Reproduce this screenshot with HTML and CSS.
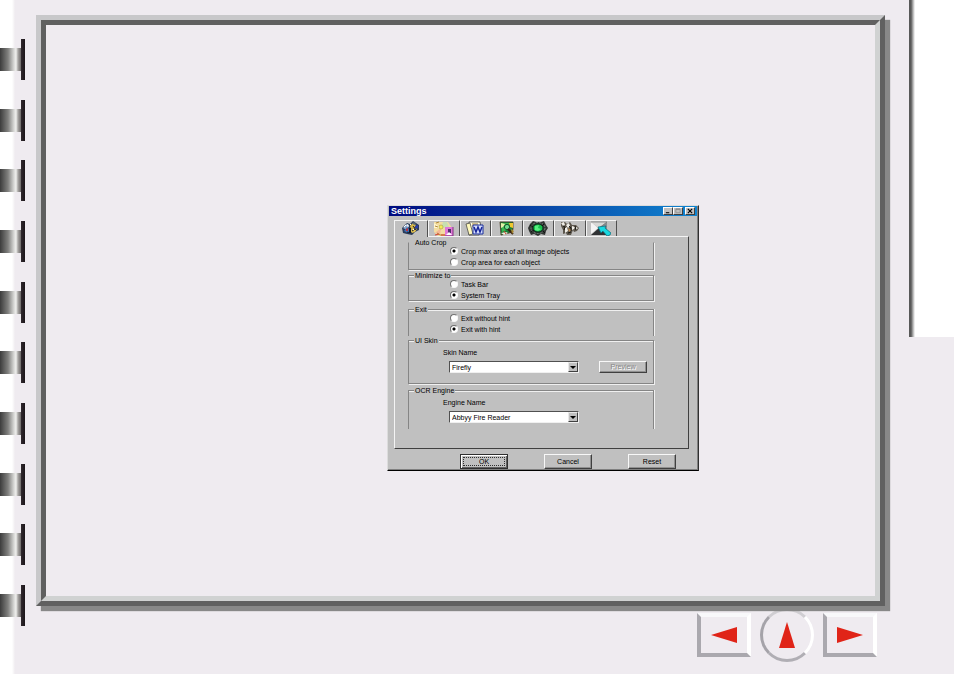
FILE: index.html
```html
<!DOCTYPE html>
<html lang="en">
<head>
<meta charset="utf-8">
<title>Settings</title>
<link rel="stylesheet" href="styles.css">
</head>
<body>
<div class="book">
  <div class="binding">
    <span class="ring"></span><span class="ring"></span><span class="ring"></span><span class="ring"></span><span class="ring"></span>
    <span class="ring"></span><span class="ring"></span><span class="ring"></span><span class="ring"></span><span class="ring"></span>
  </div>
  <main class="main">
    <div class="frame"><div class="sheet">
      <section class="dialog">
        <header class="titlebar">
          <h1>Settings</h1>
          <div class="winbtns">
            <button type="button" aria-label="Minimize"><svg viewBox="0 0 9 7"><path d="M2 5.5h4" stroke="#000" stroke-width="1.2"/></svg></button>
            <button type="button" aria-label="Maximize" disabled><svg viewBox="0 0 9 7"><path d="M2 1.5h5v4H2z" fill="none" stroke="#909090"/><path d="M2 1.2h5" stroke="#808080"/></svg></button>
            <button type="button" aria-label="Close"><svg viewBox="0 0 9 7"><path d="M2 1l5 5M7 1L2 6" stroke="#000" stroke-width="1.3"/></svg></button>
          </div>
        </header>
        <nav class="tabs">
          <button type="button" class="tab active" aria-label="General"><svg viewBox="0 0 20 15">
            <path d="M1 7l5-5 3 1 3-3 3 2 3 2v5l-4 2-3 3-5-1-4-1z" fill="#2b3b58"/>
            <path d="M2 7l4-4 2 2-2 4z" fill="#8fa9cc"/><path d="M3 10l3-4 3 3-2 3z" fill="#3c72b8"/><path d="M5 4l2-1 1 2-1 1z" fill="#e8f0f8"/>
            <path d="M5 8l2-1v3H5z" fill="#c03038"/><path d="M9 5l3-3 3 2-2 3-3 1z" fill="#d8b848"/><path d="M11 2l2-1 2 2-2 1z" fill="#586878"/>
            <path d="M14 5l3-1v3l-3 1z" fill="#283ca8"/><path d="M9 9l3-2 4 1-2 3-3 1z" fill="#e0c050"/><path d="M8 7h2v5H8z" fill="#101828"/><path d="M12 5l3 4M6 11l2 1M11 10l3-2" stroke="#182030"/><path d="M3 6l2-2M9 4l1-1M12 8l1 1" stroke="#fff"/>
          </svg></button>
          <button type="button" class="tab" aria-label="Photo CD"><svg viewBox="0 0 20 15">
            <path d="M0 1h14l4 6v6l-5 2H4l-4-4z" fill="#f3dda0"/><path d="M7 7L0 2v5z" fill="#fff6d0"/><path d="M7 7l2-6h4l2 5z" fill="#c8e0b0"/><path d="M7 7L1 12l5 2z" fill="#f4b898"/>
            <path d="M2 2l3-1M1 5l3 1M3 12l3 2h5" fill="none" stroke="#b08838"/><circle cx="7" cy="6" r="2" fill="#f4ec58" stroke="#a89848" stroke-width=".6"/>
            <path d="M11 6h8v9h-8z" fill="#e078d8"/><path d="M19 6v9h-8" fill="none" stroke="#803080"/><path d="M14 8h3v4h-3z" fill="#503068"/><path d="M12 14l3-3 3 3z" fill="#fff"/><path d="M1 14l4-1M7 14h4" stroke="#d84030"/>
          </svg></button>
          <button type="button" class="tab" aria-label="Document"><svg viewBox="0 0 20 15">
            <path d="M4 1h11l1 5-2 8H4z" fill="#fffde6" stroke="#444" stroke-width=".8"/><path d="M1 3l4-1 3 11-4 1z" fill="#fff9bb" stroke="#4b4b46" stroke-width=".8"/><path d="M7 3h6M7 5h3" stroke="#9c7a2e"/><path d="M8 4h10v9H8z" fill="#d4dcfc" stroke="#1b2f9a"/><path d="M9 6l2 5 2-5 2 5 2-5" fill="none" stroke="#16259a" stroke-width="1.5"/>
          </svg></button>
          <button type="button" class="tab" aria-label="Image"><svg viewBox="0 0 20 15">
            <path d="M3 1h13v7l-1 3-3 1-8 2z" fill="#188038" stroke="#4a3820" stroke-width=".8"/><path d="M4 2h8v6l-7 3z" fill="#38b850"/><path d="M4 2l4 1-2 3-2 1z" fill="#e4f0a8"/><path d="M12 2h4v5l-3-1z" fill="#f0c830"/><circle cx="10" cy="6" r="2.6" fill="#70e090" stroke="#185028"/><path d="M11 8l5 5" stroke="#382010" stroke-width="2"/><path d="M14 8l3 2-2 3z" fill="#a88830"/><path d="M4 12l5-1 2 1-4 2z" fill="#f0f0e0"/><path d="M7 10l2 3" stroke="#c84028"/>
          </svg></button>
          <button type="button" class="tab" aria-label="Processing"><svg viewBox="0 0 20 15">
            <path d="M2 3l3-3 3 1h5l3-1 2 4 2 3-2 3-1 4-4-1-3 2-4-2-3 1-2-4-1-3z" fill="#303432"/><ellipse cx="10" cy="7" rx="7" ry="5.5" fill="none" stroke="#7c8680" stroke-dasharray="2 1"/><ellipse cx="10" cy="7" rx="5" ry="4" fill="#18c04c" stroke="#08301c"/><path d="M7 5l4-1-1 3 3 1-3 2-3-1z" fill="#58f080"/><path d="M2 4l3 2M16 3l-2 2M3 11l3-2M15 10l2 2" stroke="#101210"/>
          </svg></button>
          <button type="button" class="tab" aria-label="Devices"><svg viewBox="0 0 20 15">
            <path d="M1 1h4l2 2 3-2 2 3h4l3 3-2 3-3 1-1-2-2 5H7l-1-2-3 1V9L1 5z" fill="#5c564c"/><path d="M1 2l3-1 1 3-2 1zM6 4l3-2 1 3-2 2zM5 7l2-1 1 4-3 2zM12 5l3 1-1 2-2 1zM16 6l2 1-2 2z" fill="#f0eee8"/><path d="M3 5l2 1-1 3M9 5l2 2v3M15 5l1 4M8 12l3-1" fill="none" stroke="#181610"/><path d="M8 7l3 2-2 2z" fill="#c09058"/>
          </svg></button>
          <button type="button" class="tab" aria-label="Mail"><svg viewBox="0 0 20 15">
            <path d="M0 1h16v13H0z" fill="#c4c4c4"/><path d="M0 1v12l7-6z" fill="#f4f4f4"/><path d="M0 1h16L8 7z" fill="#d8d8d6"/><path d="M16 1v10L8 7z" fill="#888c90"/><path d="M0 14l8-7 8 7z" fill="#303234"/><path d="M0 1h16M16 1L8 7" stroke="#707274" stroke-width=".7"/>
            <path d="M7 6l8-1-1 2 6 5-1 2-3 1-4-5-2 2z" fill="#18d8e0" stroke="#086878" stroke-width=".7"/>
          </svg></button>
        </nav>
        <form class="panel">
          <fieldset class="group crop"><legend>Auto Crop</legend>
            <label class="radio"><input type="radio" name="crop" checked>Crop max area of all image objects</label>
            <label class="radio"><input type="radio" name="crop">Crop area for each object</label>
          </fieldset>
          <fieldset class="group minimize"><legend>Minimize to</legend>
            <label class="radio"><input type="radio" name="minimize">Task Bar</label>
            <label class="radio"><input type="radio" name="minimize" checked>System Tray</label>
          </fieldset>
          <fieldset class="group exit"><legend>Exit</legend>
            <label class="radio"><input type="radio" name="exit">Exit without hint</label>
            <label class="radio"><input type="radio" name="exit" checked>Exit with hint</label>
          </fieldset>
          <fieldset class="group skin"><legend>UI Skin</legend>
            <label class="caption" for="skin">Skin Name</label>
            <div class="row">
              <span class="combo"><select id="skin"><option>Firefly</option></select><svg class="arrow" viewBox="0 0 8 8"><path d="M1 3h6L4 6z"/></svg></span>
              <button type="button" class="btn preview" disabled>Preview</button>
            </div>
          </fieldset>
          <fieldset class="group ocr"><legend>OCR Engine</legend>
            <label class="caption" for="engine">Engine Name</label>
            <div class="row">
              <span class="combo"><select id="engine"><option>Abbyy Fire Reader</option></select><svg class="arrow" viewBox="0 0 8 8"><path d="M1 3h6L4 6z"/></svg></span>
            </div>
          </fieldset>
        </form>
        <footer class="actions">
          <button type="button" class="btn default">OK</button>
          <button type="button" class="btn">Cancel</button>
          <button type="button" class="btn">Reset</button>
        </footer>
      </section>
    </div></div>
    <nav class="pager">
      <a class="page-link" href="#previous" aria-label="Previous page"><svg viewBox="0 0 26 18"><path d="M0 9L26 1v16z"/></svg></a>
      <a class="page-link round" href="#top" aria-label="Contents"><svg viewBox="0 0 18 26"><path d="M9 0l8 26H1z"/></svg></a>
      <a class="page-link" href="#next" aria-label="Next page"><svg viewBox="0 0 26 18"><path d="M26 9L0 1v16z"/></svg></a>
    </nav>
  </main>
  <aside class="edge"></aside>
</div>
</body>
</html>
```
FILE: styles.css
```css
* { box-sizing: border-box; }

body {
  margin: 0;
  background: #efebf0;
  font: 7px/11px "Liberation Sans", Arial, sans-serif;
  color: #000;
}

button, select, input { font: inherit; color: inherit; margin: 0; }
svg { display: block; }

.book {
  display: grid;
  grid-template-columns: 36px minmax(0, 1fr) 69px;
  min-height: 100vh;
  background: linear-gradient(90deg, #fff 12px, #f4f2f4 14px, #efebf0 15px);
}

.binding {
  display: flex;
  flex-direction: column;
  justify-content: space-between;
  padding: 39px 0 48px;
}
.ring {
  width: 25px;
  height: 41px;
  background:
    linear-gradient(90deg, #30282e, #1c161a) right / 4px 100% no-repeat,
    linear-gradient(90deg, #3c3c3c, #80807e 8px, #d8d8d6 14px, #f0f0ee 16px, #a8a6a4 18px, #6c6868 21px) left center / 21px 23px no-repeat;
}

.main {
  display: flex;
  flex-direction: column;
  padding: 15px 0 12px;
}
.frame {
  display: flex;
  flex: 1;
  position: relative;
  z-index: 1;
  border: 5px solid;
  border-color: #c8c8ca #606060 #606060 #c8c8ca;
  box-shadow: 5px 5px 1px #888;
}
.sheet {
  flex: 1;
  display: grid;
  grid-template-columns: 341fr 312px 176fr;
  grid-template-rows: 179fr auto 125fr;
  border: 5px solid;
  border-color: #606060 #d0d2d2 #d0d2d2 #606060;
  background: #efebf0;
}

.dialog {
  grid-area: 2 / 2;
  padding: 0 1px;
  background: #c0c0c0;
  border: 1px solid;
  border-color: #dcdcdc #303030 #000 #dcdcdc;
  box-shadow: inset -1px -1px #808080;
}
.titlebar {
  display: flex;
  align-items: center;
  justify-content: space-between;
  height: 10px;
  padding: 0 2px;
  background: linear-gradient(90deg, #000a80, #1084d0);
}
.titlebar h1 {
  margin: 0;
  color: #fff;
  font-size: 9px;
  line-height: 10px;
}
.winbtns { display: flex; }
.winbtns button {
  width: 10px;
  height: 8px;
  padding: 0;
  background: #c0c0c0;
  border: 1px solid;
  border-color: #fff #404040 #404040 #fff;
}
.winbtns button:last-child { margin-left: 2px; }
.winbtns svg { width: 100%; height: 100%; }

.tabs {
  display: grid;
  grid-template-columns: 34px repeat(6, 1fr);
  width: 223px;
  margin: 4px 0 0 5px;
}
.tab {
  display: flex;
  justify-content: center;
  height: 16px;
  padding: 0;
  background: #c0c0c0;
  border: solid;
  border-width: 1px 1px 0;
  border-color: #f4f4f4 #505050 #f4f4f4 #f4f4f4;
}
.tab svg { flex: none; width: 20px; height: 15px; }
.tab.active { height: 17px; margin-bottom: -1px; position: relative; }

.panel {
  margin: 0 8px 0 5px;
  padding: 3px 34px 19px 13px;
  border: 1px solid;
  border-color: #f4f4f4 #404040 #404040 #f4f4f4;
}
.group {
  min-width: 0;
  margin: 0;
  padding: 0 6px;
  border: 1px solid #858585;
  box-shadow: 1px 1px #f0f0f0, inset 0 1px #f0f0f0;
}
.group legend {
  padding: 0 1px;
  margin-left: -1px;
  background: #c0c0c0;
  line-height: 6px;
}
.crop { height: 30px; border-top-color: transparent; box-shadow: 1px 1px #f0f0f0; }
.minimize { height: 28px; margin-top: 3px; }
.exit { height: 29px; margin-top: 6px; }
.skin { height: 46px; margin-top: 2px; }
.ocr { height: 41px; margin-top: 4px; }
.exit, .ocr { border-bottom: 0; box-shadow: 1px 0 #f0f0f0, inset 0 1px #f0f0f0; }

.radio {
  display: flex;
  align-items: center;
  gap: 3px;
  height: 11px;
  margin-left: 35px;
}
.radio input {
  appearance: none;
  width: 8px;
  height: 8px;
  border: 1px solid;
  border-color: #707070 #f8f8f8 #f8f8f8 #707070;
  border-radius: 50%;
  background: #fff;
}
.radio input:checked { background: radial-gradient(circle, #000 1px, #fff 2px); }

.caption { display: block; margin: 3px 0 0 28px; }
.row {
  display: flex;
  align-items: center;
  justify-content: space-between;
  margin: 3px 0 0 34px;
}
.combo { position: relative; width: 130px; height: 12px; }
.combo select {
  display: block;
  appearance: none;
  width: 100%;
  height: 100%;
  padding: 0 12px 0 2px;
  background: #fff;
  border: 1px solid;
  border-color: #505050 #f0f0f0 #f0f0f0 #505050;
  border-radius: 0;
}
.arrow {
  position: absolute;
  top: 1px;
  right: 1px;
  width: 10px;
  height: 10px;
  background: #c0c0c0;
  border: 1px solid;
  border-color: #e8e8e8 #404040 #404040 #e8e8e8;
  pointer-events: none;
}

.btn {
  width: 48px;
  height: 15px;
  padding: 0;
  background: #c0c0c0;
  border: 1px solid;
  border-color: #f8f8f8 #404040 #404040 #f8f8f8;
  box-shadow: inset -1px -1px #909090;
}
.btn.preview { height: 12px; color: #888; text-shadow: 1px 1px #fff; line-height: 9px; }
.btn.default { border-color: #303030; box-shadow: inset 1px 1px #fff, inset -1px -1px #606060; outline: 1px dotted #303030; outline-offset: -4px; }

.actions {
  display: flex;
  gap: 36px;
  padding: 5px 0 1px 71px;
}

.pager {
  display: flex;
  justify-content: flex-end;
  align-items: center;
  gap: 9px;
  padding: 2px 8px 0 0;
}
.page-link {
  display: flex;
  align-items: center;
  justify-content: center;
  width: 54px;
  height: 44px;
  border: 4px solid;
  border-color: #f8f8fa #fff #aaa8ae #aaa8ae;
}
.page-link svg { width: 26px; height: 18px; fill: #e02418; }
.page-link.round {
  width: 54px;
  height: 54px;
  border-width: 3px;
  border-radius: 50%;
  border-color: #d0ced2 #fff #b0aeb4 #a5a3a9;
}
.page-link.round svg { width: 18px; height: 26px; }

.edge {
  height: 50vh;
  margin-left: 24px;
  background: linear-gradient(90deg, #585858 2px, #b0b0b0 4px, #fff 6px);
}
```
